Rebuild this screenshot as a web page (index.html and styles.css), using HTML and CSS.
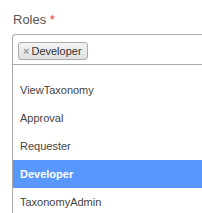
FILE: index.html
```html
<!DOCTYPE html>
<html lang="en">
<head>
    <meta charset="UTF-8">
    <title>Roles</title>
    <link rel="stylesheet" href="styles.css">
</head>
<body>
    <div class="form-group">
        <label class="field-label">Roles <span class="required">*</span></label>

        <div class="select-box">
            <span class="tag"><span class="tag-remove">&times;</span>Developer</span>
        </div>

        <ul class="dropdown">
            <li class="option">ViewTaxonomy</li>
            <li class="option">Approval</li>
            <li class="option">Requester</li>
            <li class="option highlighted">Developer</li>
            <li class="option">TaxonomyAdmin</li>
        </ul>
    </div>
</body>
</html>
```

FILE: styles.css
```css
* {
    margin: 0;
    padding: 0;
    box-sizing: border-box;
}

body {
    font-family: "Liberation Sans", Arial, sans-serif;
    background: white;
    overflow: hidden;
}

.form-group {
    padding: 12px 0 0 12px;
}

.field-label {
    display: block;
    font-size: 13px;
    line-height: 16px;
    color: #555;
    margin-bottom: 6px;
    padding-left: 1px;
}

.required {
    color: #f03c3c;
}

.select-box {
    height: 31px;
    border: 1px solid #aaa;
    border-right: none;
    border-radius: 4px 0 0 0;
    padding: 6px 0 0 5px;
}

.tag {
    display: inline-flex;
    align-items: center;
    height: 18px;
    padding: 0 5px 0 4px;
    border: 1px solid #aaa;
    border-radius: 3px;
    background: linear-gradient(#f4f4f4, #e0e0e0);
    font-size: 11px;
    color: #333;
}

.tag-remove {
    color: #999;
    font-weight: bold;
    font-size: 11px;
    margin-right: 2px;
}

.dropdown {
    list-style: none;
    border-left: 1px solid #aaa;
    padding-top: 11px;
}

.option {
    height: 28px;
    line-height: 28px;
    padding-left: 7px;
    font-size: 11px;
    color: #444;
}

.option.highlighted {
    background: #5897fb;
    color: white;
    font-weight: bold;
}
```
